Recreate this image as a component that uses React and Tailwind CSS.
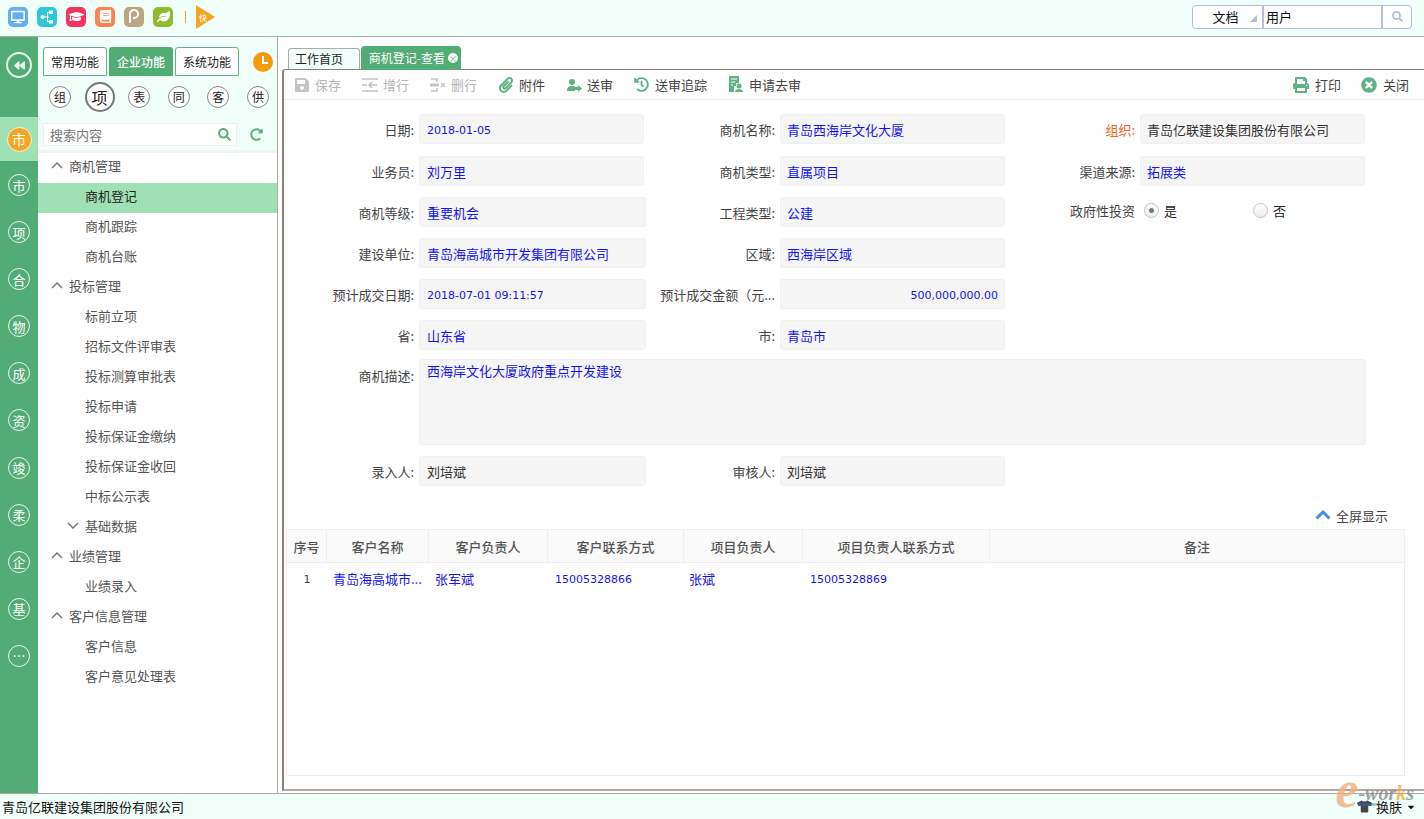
import React from "react";
import { FaSave, FaPaperclip, FaHistory, FaPrint, FaTimesCircle, FaDesktop, FaSearch, FaRedoAlt, FaBackward, FaGraduationCap, FaLeaf, FaBook, FaCaretDown, FaTshirt } from "react-icons/fa";

const cjk = "font-['Noto_Sans_CJK_SC','Noto_Sans',sans-serif]";
const num = "font-['DejaVu_Sans','Noto_Sans_CJK_SC',sans-serif] text-[11px]";

const railItems = ["市", "项", "合", "物", "成", "资", "竣", "柔", "企", "基", "…"];
const quick = [["组", false], ["项", true], ["表", false], ["同", false], ["客", false], ["供", false]];

const menu = [
  { t: "商机管理", open: true, kids: ["商机登记", "商机跟踪", "商机台账"] },
  { t: "投标管理", open: true, kids: ["标前立项", "招标文件评审表", "投标测算审批表", "投标申请", "投标保证金缴纳", "投标保证金收回", "中标公示表"] },
  { t: "基础数据", sub: true, kids: [] },
  { t: "业绩管理", open: true, kids: ["业绩录入"] },
  { t: "客户信息管理", open: true, kids: ["客户信息", "客户意见处理表"] },
];

const columns = [
  { t: "序号", w: "w-10" },
  { t: "客户名称", w: "w-[102px]" },
  { t: "客户负责人", w: "w-[119px]" },
  { t: "客户联系方式", w: "w-[136px]" },
  { t: "项目负责人", w: "w-[119px]" },
  { t: "项目负责人联系方式", w: "w-[187px]" },
  { t: "备注", w: "flex-1" },
];

const Chevron = ({ up }) => (
  <svg width="12" height="7" viewBox="0 0 12 7" fill="none" stroke="#777" strokeWidth="1.5" className="mr-[6px] shrink-0">
    <path d={up ? "M1 6l5-5 5 5" : "M1 1l5 5 5-5"} />
  </svg>
);
const AddRowIcon = () => (
  <svg width="16" height="16" viewBox="0 0 16 16" fill="none" stroke="#c4c4c4" strokeWidth="1.6">
    <path d="M0 2h16M0 14h16M0 8h5M15 8H7M10 5L7 8l3 3" />
  </svg>
);
const DelRowIcon = () => (
  <svg width="16" height="16" viewBox="0 0 16 16" fill="none" stroke="#c4c4c4" strokeWidth="1.6">
    <path d="M1 2h6v3M1 14h6v-3" />
    <path d="M0 8h9" strokeWidth="3" />
    <path d="M11 6l4 4M15 6l-4 4" strokeWidth="1.2" />
  </svg>
);
const SendIcon = () => (
  <svg width="16" height="16" viewBox="0 0 16 16" fill="#5fb283">
    <circle cx="6" cy="5" r="3" />
    <path d="M1 14c0-4 2-5 5-5 1.500 0 3 .5 3 .5V14z" />
    <path d="M9 10h3V8l4 3.500-4 3.500v-2H9z" />
  </svg>
);
const ApplyIcon = () => (
  <svg width="16" height="17" viewBox="0 0 16 17" fill="#5fb283">
    <path d="M1 0h10v7H8v3H6v6H1z" />
    <path d="M3 3h6M3 6h4M3 9h2" stroke="#fff" strokeWidth="1.200" />
    <circle cx="11" cy="10" r="2.500" />
    <path d="M7 16c0-2 2-3 4-3s4 1 4 3z" />
  </svg>
);

function ToolButton({ icon, label, off }) {
  return (
    <div className={`flex items-center gap-[5px] ${off ? "text-[#b5b5b5]" : "text-[#444]"}`}>
      <span className="flex w-[17px] justify-center">{icon}</span>
      <span>{label}</span>
    </div>
  );
}

function Field({ label, value, w = "w-[225px]", labelW = "w-[135px]", pad = "px-[7px]", red, number, right, mono }) {
  return (
    <div className="flex items-center">
      <div className={`${labelW} shrink-0 pr-[5px] text-right ${red ? "text-[#e8661a]" : "text-[#444]"}`}>{label}</div>
      <div className={`${w} ${pad} flex h-[30px] shrink-0 items-center rounded-[3px] border border-[#f0f0f0] bg-[#f5f5f5] ${right ? "justify-end" : ""} ${mono ? "text-[#333]" : "text-[#1414ee]"} ${number ? `${num} pt-[2px]` : ""}`}>
        {value}
      </div>
    </div>
  );
}

function Radio({ checked, label, w }) {
  return (
    <div className={`flex items-center gap-[5px] ${w}`}>
      <span className="flex h-[15px] w-[15px] items-center justify-center rounded-full border border-[#c4c4c4] bg-gradient-to-b from-white to-[#ececec]">
        {checked && <span className="h-[5px] w-[5px] rounded-full bg-[#777]" />}
      </span>
      <span className="text-[#222]">{label}</span>
    </div>
  );
}

function AppIcon({ bg, children }) {
  return <div className={`flex h-5 w-5 items-center justify-center rounded-[5px] text-white ${bg}`}>{children}</div>;
}

export default function App() {
  return (
    <div className={`flex h-screen w-full flex-col overflow-hidden bg-white text-[13px] leading-none ${cjk}`}>
      {/* top bar */}
      <div className="flex h-[37px] shrink-0 items-center border-b border-[#aaa] bg-[#f0fffa] pb-[3px] pl-2 pr-[12px]">
        <div className="flex items-center gap-[9px]">
          <AppIcon bg="bg-[#62aef5]"><FaDesktop size={14} /></AppIcon>
          <AppIcon bg="bg-[#2dc6dc]">
            <svg width="14" height="14" viewBox="0 0 14 14" fill="#fff"><circle cx="2.500" cy="7" r="2" /><rect x="9" y="0.500" width="4" height="3.500" /><rect x="9" y="10" width="4" height="3.500" /><path d="M4 6.500h3V2h2v1H8v3.500h1v1H8V11h1v1H7V7.500H4z" /></svg>
          </AppIcon>
          <AppIcon bg="bg-[#f4345c]"><FaGraduationCap size={15} /></AppIcon>
          <AppIcon bg="bg-[#fb8350]"><FaBook size={13} /></AppIcon>
          <AppIcon bg="bg-[#bba583]">
            <svg width="14" height="15" viewBox="0 0 14 15" fill="none" stroke="#fff" strokeWidth="2"><path d="M3 14V5a4 4 0 1 1 4 4H6" /></svg>
          </AppIcon>
          <AppIcon bg="bg-[#8fbb2e]"><FaLeaf size={13} /></AppIcon>
        </div>
        <div className="ml-[12px] h-3 w-px bg-[#f0a030]" />
        <div className="ml-[10px]">
          <svg width="20" height="24" viewBox="0 0 20 24">
            <path d="M0 0l19 12L0 24z" fill="#f5a623" />
            <text x="3" y="15.500" fontSize="8" fill="#fff">快</text>
          </svg>
        </div>
        <div className="ml-auto flex h-6 items-stretch rounded-[4px] border border-[#b6bdd9] bg-white">
          <div className="relative flex w-[71px] items-center justify-center border-r-2 border-[#b6bdd9] pr-1 text-[#111]">
            文档
            <span className="absolute bottom-[6px] right-[5px] h-0 w-0 border-b-[7px] border-l-[7px] border-b-[#b6bdd9] border-l-transparent" />
          </div>
          <div className="flex w-[119px] items-center border-r-2 border-[#b6bdd9] pl-[2px] text-[#111]">用户</div>
          <div className="flex w-[28px] items-center justify-center text-[#b6bdd9]"><FaSearch size={11} /></div>
        </div>
      </div>

      <div className="flex min-h-0 flex-1">
        {/* icon rail */}
        <div className="flex w-[38px] shrink-0 flex-col items-center bg-[#52ad75]">
          <div className="flex h-20 shrink-0 items-start pt-[15px]">
            <div className="flex h-[26px] w-[26px] items-center justify-center rounded-full border-2 border-[#e8f6ee] text-[#e8f6ee]"><FaBackward size={11} /></div>
          </div>
          <div className="flex h-[44px] w-full shrink-0 items-center justify-center bg-[#9fe0b5]">
            <div className="flex h-[25px] w-[25px] items-center justify-center rounded-full border border-[#fff2d8] bg-[#f5a623] text-[14px] text-white">市</div>
          </div>
          <div className="flex flex-col gap-[25.1px] pt-[13px]">
            {railItems.map((r, i) => (
              <div key={i} className="flex h-[22px] w-[22px] items-center justify-center rounded-full border border-[#e8f6ee] text-[13px] text-white">{r}</div>
            ))}
          </div>
        </div>

        {/* side menu */}
        <div className="flex w-[240px] shrink-0 flex-col border-r border-[#aaa]">
          <div className="h-[116px] shrink-0 border-b-[3px] border-[#f0f4f2] bg-[#f0fffa]">
            <div className="flex items-center pl-[5px] pr-[4px] pt-[10px] text-[12px]">
              <div className="flex h-[29px] w-[64px] items-center justify-center rounded-t-[3px] border border-[#5fb283] bg-white text-[#222]">常用功能</div>
              <div className="ml-[2px] flex h-[29px] w-[64px] items-center justify-center rounded-t-[3px] bg-[#52ad75] font-medium text-white">企业功能</div>
              <div className="ml-[2px] flex h-[29px] w-[64px] items-center justify-center rounded-t-[3px] border border-[#5fb283] bg-white text-[#222]">系统功能</div>
              <div className="relative ml-[14px] h-5 w-5 rounded-full bg-[#f59a08]">
                <div className="absolute left-[9px] top-[4px] h-[7px] w-[2px] bg-white" />
                <div className="absolute left-[9px] top-[10px] h-[2px] w-[6px] bg-white" />
              </div>
            </div>
            <div className="flex h-[42px] items-center justify-between pl-[11px] pr-[8px]">
              {quick.map(([q, big]) => (
                <div key={q} className={`flex items-center justify-center rounded-full ${big ? "-mx-1 h-[30px] w-[30px] border-2 border-[#777] text-[16px]" : "h-[22px] w-[22px] border border-[#888] text-[12px]"} bg-white text-[#222]`}>{q}</div>
              ))}
            </div>
            <div className="flex items-center pl-[5px] pt-[5px]">
              <div className="flex h-[23px] w-[194px] items-center justify-between border border-[#eef0ef] bg-white pl-[6px] pr-[5px] text-[#777]">
                <span>搜索内容</span>
                <FaSearch size={13} className="text-[#5fb283]" />
              </div>
              <FaRedoAlt size={13} className="ml-[13px] text-[#5fb283]" />
            </div>
          </div>
          <div className="flex-1 bg-white">
            {menu.map((m) => (
              <div key={m.t}>
                <div className={`flex h-[30px] items-center pb-[5px] text-[#555] ${m.sub ? "pl-[29px]" : "pl-[13px]"}`}>
                  <Chevron up={m.open} />
                  {m.t}
                </div>
                {m.kids.map((k) => (
                  <div key={k} className={`flex h-[30px] items-center pb-[5px] pl-[47px] ${k === "商机登记" ? "bg-[#9fe0b5] text-[#222]" : "text-[#555]"}`}>{k}</div>
                ))}
              </div>
            ))}
          </div>
        </div>

        {/* main */}
        <div className="flex min-w-0 flex-1 flex-col pb-[2px] pl-1">
          <div className="flex h-[32px] shrink-0 items-end pl-[6px] text-[12px]">
            <div className="flex h-[21px] w-[72px] items-center rounded-t-[4px] border border-b-0 border-[#aaa] bg-[#f0fffa] pl-[6px] text-[#222]">工作首页</div>
            <div className="z-10 ml-px -mb-px flex h-[24px] w-[100px] items-center justify-end gap-[3px] rounded-t-[4px] bg-[#52ad75] pr-[3px] text-white">
              商机登记-查看
              <span className="flex h-[10px] w-[10px] items-center justify-center rounded-full bg-white text-[9px] text-[#52ad75]">×</span>
            </div>
          </div>
          <div className="flex min-h-0 flex-1 flex-col rounded-tl-[3px] border-b-2 border-l-2 border-t border-[#8f7f74] border-b-[#b5a99f]">
            {/* toolbar */}
            <div className="flex h-[30px] shrink-0 items-center justify-between border-b border-[#eee] pl-[9px] pr-[15px]">
              <div className="flex items-center gap-[20px]">
                <ToolButton off icon={<FaSave size={16} className="text-[#c4c4c4]" />} label="保存" />
                <ToolButton off icon={<AddRowIcon />} label="增行" />
                <ToolButton off icon={<DelRowIcon />} label="删行" />
                <ToolButton icon={<FaPaperclip size={16} className="text-[#5fb283]" />} label="附件" />
                <ToolButton icon={<SendIcon />} label="送审" />
                <ToolButton icon={<FaHistory size={15} className="text-[#5fb283]" />} label="送审追踪" />
                <ToolButton icon={<ApplyIcon />} label="申请去审" />
              </div>
              <div className="flex items-center gap-[20px]">
                <ToolButton icon={<FaPrint size={16} className="text-[#5fb283]" />} label="打印" />
                <ToolButton icon={<FaTimesCircle size={16} className="text-[#5fb283]" />} label="关闭" />
              </div>
            </div>

            {/* form */}
            <div className="flex flex-col pt-[14px]">
              <div className="flex">
                <Field label="日期:" value="2018-01-05" number />
                <Field label="商机名称:" value="青岛西海岸文化大厦" labelW="w-[136px]" pad="px-[6px]" />
                <Field label="组织:" value="青岛亿联建设集团股份有限公司" red mono pad="px-[6px]" />
              </div>
              <div className="mt-3 flex">
                <Field label="业务员:" value="刘万里" />
                <Field label="商机类型:" value="直属项目" labelW="w-[136px]" pad="px-[6px]" />
                <Field label="渠道来源:" value="拓展类" pad="px-[6px]" />
              </div>
              <div className="mt-[11px] flex">
                <Field label="商机等级:" value="重要机会" w="w-[227px]" />
                <Field label="工程类型:" value="公建" labelW="w-[134px]" pad="px-[6px]" />
                <div className="flex items-center pb-[3px]">
                  <div className="w-[135px] pr-[5px] text-right text-[#444]">政府性投资</div>
                  <div className="ml-[4px] flex">
                    <Radio checked label="是" w="w-[109px]" />
                    <Radio label="否" />
                  </div>
                </div>
              </div>
              <div className="mt-[11px] flex">
                <Field label="建设单位:" value="青岛海高城市开发集团有限公司" w="w-[227px]" />
                <Field label="区域:" value="西海岸区域" labelW="w-[134px]" pad="px-[6px]" />
              </div>
              <div className="mt-[11px] flex">
                <Field label="预计成交日期:" value="2018-07-01 09:11:57" number w="w-[227px]" />
                <Field label="预计成交金额（元..." value="500,000,000.00" number right labelW="w-[134px]" pad="px-[6px]" />
              </div>
              <div className="mt-[11px] flex">
                <Field label="省:" value="山东省" w="w-[227px]" />
                <Field label="市:" value="青岛市" labelW="w-[134px]" pad="px-[6px]" />
              </div>
              <div className="mt-[9px] flex">
                <div className="w-[135px] shrink-0 pr-[5px] pt-[10px] text-right text-[#444]">商机描述:</div>
                <div className="h-[86px] w-[947px] rounded-[3px] border border-[#f0f0f0] bg-[#f5f5f5] px-[7px] pt-[4px] text-[#1414ee]">西海岸文化大厦政府重点开发建设</div>
              </div>
              <div className="mt-[11px] flex">
                <Field label="录入人:" value="刘培斌" w="w-[227px]" mono />
                <Field label="审核人:" value="刘培斌" labelW="w-[134px]" mono pad="px-[6px]" />
              </div>
            </div>

            {/* grid */}
            <div className="flex h-[43px] shrink-0 items-center justify-end pr-[36px] pt-[15px] text-[#444]">
              <svg width="16" height="10" viewBox="0 0 16 10" fill="none" stroke="#4a8fdc" strokeWidth="3" className="mr-[5px]">
                <path d="M1.500 8.500L8 2l6.500 6.500" />
              </svg>
              全屏显示
            </div>
            <div className="ml-[2px] mr-[19px] flex min-h-0 flex-1 flex-col border-x border-b border-[#eee]">
              <div className="flex h-[34px] shrink-0 border-y border-[#eee] bg-[#fafafa] font-medium text-[#555]">
                {columns.map((c) => (
                  <div key={c.t} className={`flex items-center justify-center border-r border-[#eee] last:border-r-0 ${c.w}`}>{c.t}</div>
                ))}
              </div>
              <div className="flex h-[33px] shrink-0 pb-[3px] text-[#1414ee]">
                <div className="flex w-10 items-center justify-center pt-[2px] text-[#444]"><span className={num}>1</span></div>
                <div className="flex w-[102px] items-center pl-[6px]">青岛海高城市...</div>
                <div className="flex w-[119px] items-center pl-[6px]">张军斌</div>
                <div className={`flex w-[136px] items-center pl-[7px] pt-[2px] ${num}`}>15005328866</div>
                <div className="flex w-[119px] items-center pl-[5px]">张斌</div>
                <div className={`flex w-[187px] items-center pl-[7px] pt-[2px] ${num}`}>15005328869</div>
              </div>
            </div>
            <div className="h-[13px] shrink-0" />
          </div>
        </div>
      </div>

      {/* bottom bar */}
      <div className="relative flex h-[26px] shrink-0 items-center justify-between border-t border-[#aaa] bg-[#f0fffa] pl-[2px] pr-[8px] text-[#111]">
        <span>青岛亿联建设集团股份有限公司</span>
        <div className="flex items-center gap-[4px]">
          <FaTshirt size={15} className="text-[#444]" />
          <span>换肤</span>
          <FaCaretDown size={10} />
        </div>
        <div className="absolute right-[40px] top-[9px] h-[3px] w-[26px] rounded-full bg-gradient-to-r from-[#3a5a9a] to-transparent" />
        <div className="absolute -top-[30px] right-[10px] flex items-end font-['Liberation_Serif',serif] font-bold italic leading-none">
          <span className="text-[52px] text-[#f2b07c] opacity-80">e</span>
          <span className="mb-[13px] text-[20px] text-[#8a8a8a] opacity-80">-wor<span className="text-[#f0b040]">k</span>s</span>
        </div>
      </div>
    </div>
  );
}
